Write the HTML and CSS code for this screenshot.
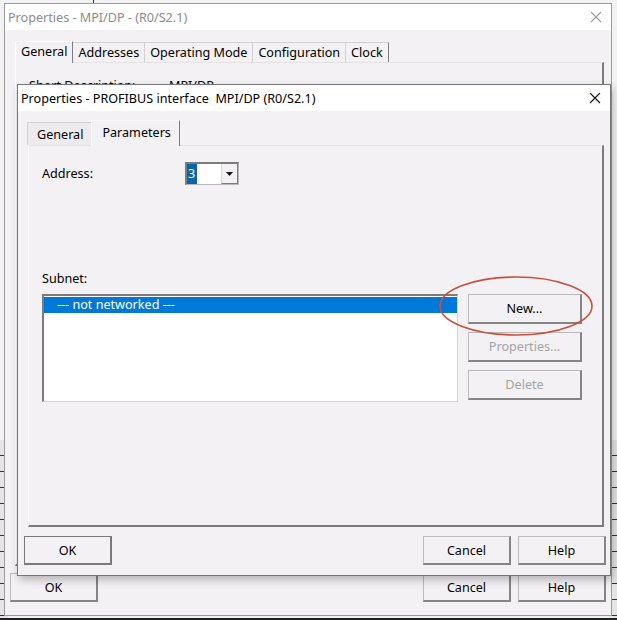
FILE: index.html
```html
<!DOCTYPE html>
<html lang="en">

<head>
  <meta charset="UTF-8" />
  <meta name="viewport" content="width=device-width, initial-scale=1.0" />
  <title>Properties - PROFIBUS interface</title>
  <link rel="stylesheet" href="styles.css">
</head>

<body>
  <div class="screen">
    <div class="strip strip-left"></div>
    <div class="strip strip-right"></div>
    <div class="tick"></div>

    <!-- back window -->
    <div class="window outer">
      <div class="titlebar inactive">
        <span>Properties - MPI/DP - (R0/S2.1)</span>
        <svg class="close" width="12" height="12" viewBox="0 0 12 12"><path d="M1 1L11 11M11 1L1 11" /></svg>
      </div>
      <div class="body outer-body">
        <div class="tabs">
          <div class="tab active">General</div>
          <div class="tab">Addresses</div>
          <div class="tab">Operating Mode</div>
          <div class="tab">Configuration</div>
          <div class="tab">Clock</div>
        </div>
        <div class="panel outer-panel">
          <!-- only the top of this line shows above the front window -->
          <div class="short-clip">
            <div class="short"><span class="short-label">Short Description:</span><span>MPI/DP</span></div>
          </div>
        </div>
        <div class="footer outer-footer">
          <button class="btn">OK</button>
          <div class="spacer"></div>
          <button class="btn">Cancel</button>
          <button class="btn">Help</button>
        </div>
      </div>
    </div>

    <!-- front window -->
    <div class="window inner">
      <div class="titlebar">
        <span>Properties - PROFIBUS interface&nbsp; MPI/DP (R0/S2.1)</span>
        <svg class="close" width="12" height="12" viewBox="0 0 12 12"><path d="M1 1L11 11M11 1L1 11" /></svg>
      </div>
      <div class="body inner-body">
        <div class="tabs inner-tabs">
          <div class="tab">General</div>
          <div class="tab active">Parameters</div>
        </div>
        <div class="panel inner-panel">
          <div class="row address">
            <label>Address:</label>
            <div class="combo">
              <span class="combo-value"><span class="sel">3</span></span>
              <span class="combo-arrow"><svg width="7" height="4" viewBox="0 0 7 4"><path d="M0 0H7L3.5 4Z" /></svg></span>
            </div>
          </div>
          <div class="subnet-label">Subnet:</div>
          <div class="row subnet">
            <div class="listbox">
              <div class="item selected">--- not networked ---</div>
            </div>
            <div class="side-buttons">
              <button class="btn">New...</button>
              <button class="btn disabled">Properties...</button>
              <button class="btn disabled">Delete</button>
            </div>
          </div>
        </div>
        <div class="footer inner-footer">
          <button class="btn default">OK</button>
          <div class="spacer"></div>
          <button class="btn">Cancel</button>
          <button class="btn">Help</button>
        </div>
      </div>
    </div>

    <svg class="mark" width="160" height="64" viewBox="0 0 160 64">
      <ellipse cx="79" cy="31" rx="76" ry="29" />
    </svg>
  </div>
</body>

</html>
```

FILE: styles.css
```css
* {
  margin: 0;
  padding: 0;
  box-sizing: border-box;
}

body {
  background: #ffffff;
  font-family: "Noto Sans", "Open Sans", sans-serif;
  font-size: 12.6px;
  color: #000;
}

.screen {
  width: 617px;
  height: 620px;
  position: relative;
  overflow: hidden;
  background: #f2f2f2;
  border-bottom: 2px solid #222;
}

/* desktop bits showing round the windows */
.strip {
  position: absolute;
  top: 440px;
  width: 8px;
  height: 180px;
  background: repeating-linear-gradient(to bottom, #e4e4e4 0, #e4e4e4 15px, #333 15px, #333 16px);
}

.strip-left {
  left: 0;
}

.strip-right {
  right: 0;
}

.tick {
  position: absolute;
  left: 93px;
  top: 0;
  width: 1px;
  height: 4px;
  background: #333;
}

.window {
  position: absolute;
  display: flex;
  flex-direction: column;
  background: #f4f1f4;
  border: 1px solid #9a9a9a;
}

.outer {
  left: 4px;
  top: 3px;
  width: 608px;
  height: 613px;
}

.inner {
  left: 17px;
  top: 84px;
  width: 594px;
  height: 492px;
  border-color: #777;
  box-shadow: 2px 4px 8px rgba(0, 0, 0, 0.25);
}

.titlebar {
  height: 26px;
  flex: none;
  background: #fff;
  display: flex;
  align-items: center;
  justify-content: space-between;
  padding: 0 9px 0 3px;
}

.titlebar.inactive {
  color: #8c8c8c;
}

.close path {
  stroke: #111;
  stroke-width: 1.1;
  fill: none;
}

.inactive .close path {
  stroke: #9a9a9a;
}

.body {
  flex: 1;
  display: flex;
  flex-direction: column;
}

.outer-body {
  padding: 10px 7px 0 6px;
}

.inner-body {
  padding: 8px 6px 0 6px;
}

.tabs {
  display: flex;
  align-items: flex-end;
  height: 22px;
  padding-left: 5px;
}

.inner-tabs {
  height: 26px;
  padding-left: 4px;
}

.tab {
  height: 20px;
  padding: 0 5px;
  line-height: 19px;
  border: 1px solid #d2d0d2;
  border-right: 1px solid #7c7c7c;
  border-bottom: none;
  margin-left: -1px;
}

.tab.active {
  height: 22px;
  line-height: 20px;
  border-top-color: #f8f8f8;
  border-left-color: #fff;
  position: relative;
  z-index: 1;
  margin-bottom: -1px;
  background: #f4f1f4;
}

.inner-tabs .tab {
  height: 23px;
  line-height: 23px;
  padding: 0 8px 0 9px;
  background: #eeebee;
}

.inner-tabs .tab.active {
  height: 26px;
  line-height: 24px;
  padding: 0 8px 0 10px;
  background: #f4f1f4;
}

.panel {
  border: 1px solid #fff;
  border-top-color: #e4e2e4;
  border-right: 2px solid #7c7c7c;
  border-bottom: 2px solid #7c7c7c;
}

.outer-panel {
  height: 504px;
  margin-left: 4px;
  padding: 11px 0 0 13px;
}

.short-clip {
  height: 10px;
  overflow: hidden;
}

.short {
  display: flex;
  padding-top: 3px;
}

.short-label {
  width: 140px;
}

.inner-panel {
  height: 382px;
  margin: 0 0 0 4px;
  padding: 16px 20px 0 13px;
  display: flex;
  flex-direction: column;
}

.row {
  display: flex;
}

.address {
  align-items: center;
}

.address label {
  width: 143px;
}

.combo {
  width: 54px;
  height: 23px;
  display: flex;
  border: 1px solid #b9b7b9;
  border-top: 2px solid #7c7c7c;
  border-left: 2px solid #7c7c7c;
  background: #fff;
}

.combo-value {
  flex: 1;
  display: flex;
  align-items: stretch;
}

.sel {
  background: #0a64ad;
  color: #fff;
  line-height: 19px;
  padding: 0 2px 0 1px;
}

.combo-arrow {
  width: 17px;
  display: flex;
  align-items: center;
  justify-content: center;
  background: #f4f1f4;
  border-left: 1px solid #d8d6d8;
  border-right: 1px solid #7c7c7c;
  border-bottom: 1px solid #7c7c7c;
}

.combo-arrow path {
  fill: #111;
}

.subnet-label {
  margin-top: 85px;
  height: 24px;
}

.subnet {
  gap: 10px;
}

.listbox {
  width: 416px;
  height: 108px;
  background: #fff;
  border: 1px solid #d8d6d8;
  border-top: 2px solid #7c7c7c;
  border-left: 2px solid #7c7c7c;
  padding-top: 1px;
}

.item {
  height: 16px;
  line-height: 16px;
  padding-left: 13px;
}

.item.selected {
  background: #0078d7;
  color: #fff;
}

.side-buttons {
  display: flex;
  flex-direction: column;
  gap: 8px;
}

.btn {
  font: inherit;
  color: #000;
  width: 114px;
  height: 31px;
  background: #f4f1f4;
  border: 1px solid #bcbabc;
  border-right: 2px solid #858585;
  border-bottom: 2px solid #858585;
}

.side-buttons .btn {
  height: 30px;
}

.btn.disabled {
  color: #a3a3a3;
}

.footer {
  display: flex;
  align-items: center;
  margin-right: -2px;
}

.footer .btn {
  width: 88px;
  height: 29px;
}

.footer .btn + .btn {
  margin-left: 7px;
}

.spacer {
  flex: 1;
}

.outer-footer {
  margin-top: 7px;
  margin-left: -1px;
}

.inner-footer {
  margin-top: 9px;
}

.btn.default {
  border: 1px solid #7a7a7a;
  border-right: 2px solid #7a7a7a;
  border-bottom: 2px solid #7a7a7a;
}

.mark {
  position: absolute;
  left: 437px;
  top: 275px;
}

.mark ellipse {
  fill: none;
  stroke: #c8503c;
  stroke-width: 1.6;
}
```
